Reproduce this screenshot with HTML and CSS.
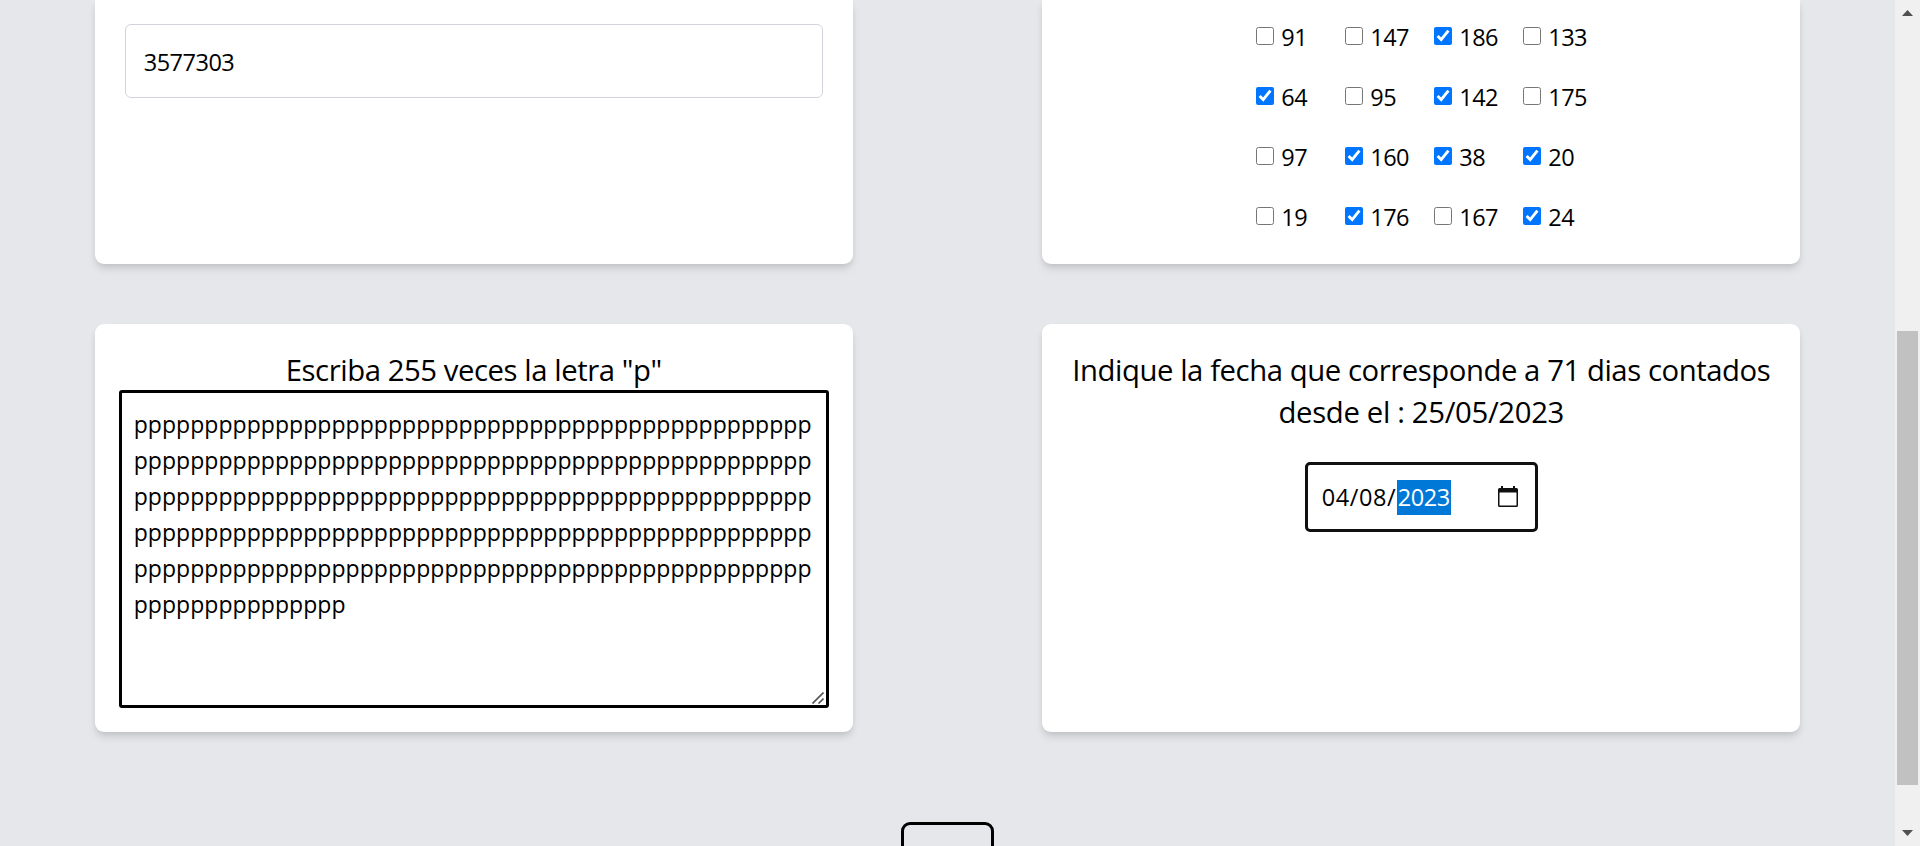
FILE: index.html
```
<!DOCTYPE html>
<html lang="es">
<head>
<meta charset="utf-8">
<title>Formulario</title>
<link rel="stylesheet" href="styles.css">
</head>
<body>
<main class="page">
  <div class="grid">
    <section class="card card-top">
      <input class="text-input" type="text" value="3577303">
    </section>
    <section class="card card-top">
      <div class="checks">
        <label class="check"><input type="checkbox"><span>91</span></label>
        <label class="check"><input type="checkbox"><span>147</span></label>
        <label class="check"><input type="checkbox" checked><span>186</span></label>
        <label class="check"><input type="checkbox"><span>133</span></label>
        <label class="check"><input type="checkbox" checked><span>64</span></label>
        <label class="check"><input type="checkbox"><span>95</span></label>
        <label class="check"><input type="checkbox" checked><span>142</span></label>
        <label class="check"><input type="checkbox"><span>175</span></label>
        <label class="check"><input type="checkbox"><span>97</span></label>
        <label class="check"><input type="checkbox" checked><span>160</span></label>
        <label class="check"><input type="checkbox" checked><span>38</span></label>
        <label class="check"><input type="checkbox" checked><span>20</span></label>
        <label class="check"><input type="checkbox"><span>19</span></label>
        <label class="check"><input type="checkbox" checked><span>176</span></label>
        <label class="check"><input type="checkbox"><span>167</span></label>
        <label class="check"><input type="checkbox" checked><span>24</span></label>
      </div>
    </section>
    <section class="card card-bottom">
      <h2 class="title"><span class="title-letter">Escriba 255 veces la letra "p"</span></h2>
      <div class="area-wrap">
        <textarea class="area" spellcheck="false">pppppppppppppppppppppppppppppppppppppppppppppppp
pppppppppppppppppppppppppppppppppppppppppppppppp
pppppppppppppppppppppppppppppppppppppppppppppppp
pppppppppppppppppppppppppppppppppppppppppppppppp
pppppppppppppppppppppppppppppppppppppppppppppppp
ppppppppppppppp</textarea>
        <svg class="grip" width="12" height="12" viewBox="0 0 12 12"><path d="M.5 11.5l11-11M6.5 11.5l5-5" stroke="#555" stroke-width="1.6" fill="none"/></svg>
      </div>
    </section>
    <section class="card card-bottom">
      <h2 class="title"><span class="title-date">Indique la fecha que corresponde a 71 dias contados</span><br><span class="title-from">desde el : 25/05/2023</span></h2>
      <div class="date">
        <span class="date-text">04/08/</span><span class="date-year">2023</span>
        <svg class="calendar" width="20" height="21" viewBox="0 0 20 21"><path fill="#101010" fill-rule="evenodd" d="M3 0h2v2h10V0h2v2h1.500a1.500 1.500 0 0 1 1.500 1.500v16a1.500 1.500 0 0 1-1.500 1.500h-17A1.500 1.500 0 0 1 0 19.500v-16A1.500 1.500 0 0 1 1.500 2H3zM1.500 6.500v13h17v-13z"/></svg>
      </div>
    </section>
  </div>
  <button class="submit" type="button"></button>
</main>
<aside class="scrollbar">
  <svg width="11" height="6" viewBox="0 0 11 6"><path d="M0 6L5.500 0L11 6z" fill="#505050"/></svg>
  <div class="thumb"></div>
  <svg class="down" width="11" height="6" viewBox="0 0 11 6"><path d="M0 0h11L5.500 6z" fill="#505050"/></svg>
</aside>
</body>
</html>
```
FILE: styles.css
```
* { box-sizing: border-box; }
body {
  margin: 0;
  height: 846px;
  display: flex;
  overflow: hidden;
  background: #e5e7eb;
  color: #000;
  font-family: "Open Sans", "Noto Sans", sans-serif;
  font-size: 23.500px;
}
.page { width: 1895px; height: 846px; overflow: hidden; }
.grid {
  display: grid;
  grid-template-columns: 1fr 1fr;
  grid-template-rows: 264px 408px;
  row-gap: 60px;
  justify-items: center;
}
.card {
  width: 758px;
  background: #fff;
  border-radius: 9px;
  box-shadow: 0 6px 9px -1px rgba(0, 0, 0, .1), 0 3px 6px -2px rgba(0, 0, 0, .1);
}
.card-top { border-radius: 0 0 9px 9px; padding: 24px 30px; }
.card-bottom { padding: 24px; }
.text-input {
  display: block;
  width: 698px;
  height: 74px;
  padding: 2px 18px 0;
  border: 1px solid #d1d5db;
  border-radius: 6px;
  font: inherit;
  letter-spacing: -.5px;
  outline: none;
}
.checks {
  display: grid;
  grid-template-columns: repeat(4, 89px);
  grid-auto-rows: 60px;
  margin: -18px 0 0 184px;
}
.check { display: flex; align-items: center; letter-spacing: -.5px; }
.check input { width: 18px; height: 18px; margin: 0 7px 0 0; }
.check span { line-height: 36px; padding-top: 1px; }
.title {
  margin: 1px 0 0;
  text-align: center;
  font-size: 29.300px;
  font-weight: 400;
  line-height: 42px;
  white-space: nowrap;
}
.title-letter, .title-date { letter-spacing: -.44px; }
.title-from { letter-spacing: -.34px; }
.area-wrap { position: relative; width: 710px; height: 318px; margin: -1px 0 0; }
.area {
  display: block;
  width: 100%;
  height: 100%;
  padding: 13px 12px;
  border: 3px solid #000;
  border-radius: 3px;
  font: inherit;
  font-size: 23px;
  line-height: 36px;
  letter-spacing: .05px;
  white-space: pre;
  overflow: hidden;
  resize: none;
  outline: none;
}
.grip { position: absolute; right: 5px; bottom: 4px; }
.date {
  display: flex;
  align-items: center;
  width: 233px;
  height: 70px;
  margin: 29px 0 0 238.500px;
  padding: 0 17px 0 14px;
  border: 3px solid #101010;
  border-radius: 5px;
  line-height: 35px;
}
.date-text { width: 75px; padding-top: 1px; letter-spacing: .6px; white-space: nowrap; }
.date-year { background: #0078d7; color: #fff; width: 54px; padding-left: 1px; letter-spacing: -.4px; white-space: nowrap; }
.calendar { margin: -2px 0 0 auto; }
.submit {
  display: block;
  width: 93px;
  height: 60px;
  margin: 90px auto 0;
  border: 3px solid #000;
  border-radius: 9px;
  background: transparent;
}
.scrollbar {
  display: flex;
  flex-direction: column;
  align-items: center;
  width: 25px;
  height: 846px;
  padding: 10px 0;
  background: #f0f0f0;
}
.thumb { width: 21px; height: 454px; margin-top: 315px; background: #c1c1c1; }
.down { margin-top: auto; }
```
